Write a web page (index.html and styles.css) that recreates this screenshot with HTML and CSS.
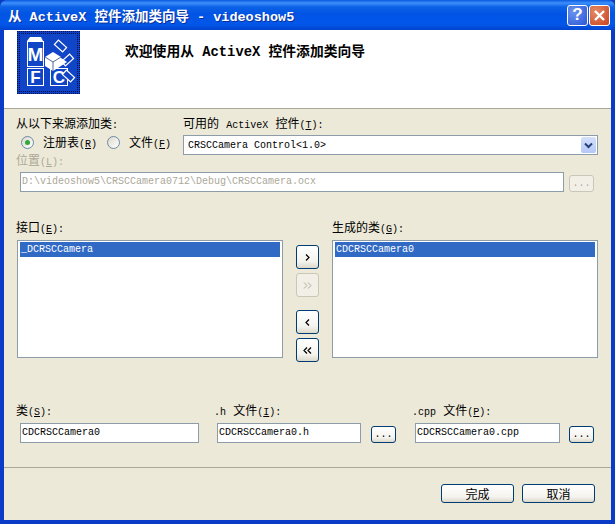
FILE: index.html
```html
<!DOCTYPE html>
<html lang="zh-CN">
<head>
    <meta charset="UTF-8">
    <title>从 ActiveX 控件添加类向导 - videoshow5</title>
    <link rel="stylesheet" href="styles.css">
</head>
<body>
    <div class="window">
        <div class="titlebar">
            <span class="title">从 ActiveX 控件添加类向导 - videoshow5</span>
            <div class="caption-btn help">?</div>
            <div class="caption-btn close">
                <svg width="13" height="13" viewBox="0 0 13 13"><path d="M2 2 L11 11 M11 2 L2 11" stroke="#fff" stroke-width="2.4" fill="none"/></svg>
            </div>
        </div>

        <div class="content">
            <div class="banner">
                <svg class="logo" width="63" height="63" viewBox="0 0 63 63">
                    <defs>
                        <pattern id="dots" width="2" height="2" patternUnits="userSpaceOnUse">
                            <rect width="2" height="2" fill="#0f3fc4"/>
                            <rect width="1" height="1" fill="#03124a"/>
                        </pattern>
                    </defs>
                    <rect width="63" height="63" fill="url(#dots)"/>
                    <rect x="3" y="3" width="57" height="57" fill="#1145c8"/>
                    <path d="M10 10 L13 6 H24 L26 10 Z" fill="#fff"/>
                    <g fill="none" stroke="#fff">
                        <rect x="10.5" y="10.5" width="16" height="25"/>
                        <rect x="10.5" y="37.5" width="16" height="17"/>
                        <rect x="33.5" y="37.5" width="17" height="17"/>
                    </g>
                    <text x="18.5" y="30" class="logo-letter" font-size="19">M</text>
                    <text x="18.5" y="52" class="logo-letter" font-size="17">F</text>
                    <text x="42" y="52" class="logo-letter" font-size="17">C</text>
                    <g fill="#1145c8" stroke="#fff" stroke-width="1.2">
                        <rect x="38" y="12" width="11" height="6" transform="rotate(42 43.5 15)"/>
                        <rect x="45" y="26" width="11" height="6" transform="rotate(-42 50.5 29)"/>
                        <rect x="46" y="42" width="11" height="6" transform="rotate(42 51.5 45)"/>
                    </g>
                    <path d="M36 21 L44 26 V35 L36 40 L28 35 V26 Z" fill="#fff"/>
                    <path d="M28 26 L36 31 L44 26 M36 31 V40" fill="none" stroke="#55689c" stroke-width="1"/>
                    <path d="M44 27 L50 31 L44 35 Z" fill="#fff"/>
                </svg>
                <h1 class="banner-title">欢迎使用从 ActiveX 控件添加类向导</h1>
            </div>

            <div class="source-row">
                <div class="source-left">
                    <div class="label">从以下来源添加类<span class="en">:</span></div>
                    <div class="radios">
                        <span class="radio checked"></span>
                        <span class="radio-text">注册表<span class="en">(<u>R</u>)</span></span>
                        <span class="radio"></span>
                        <span class="radio-text">文件<span class="en">(<u>F</u>)</span></span>
                    </div>
                    <div class="label disabled">位置<span class="en">(<u>L</u>):</span></div>
                </div>
                <div class="source-right">
                    <div class="label">可用的 <span class="en">ActiveX</span> 控件<span class="en">(<u>T</u>):</span></div>
                    <div class="combo">
                        <span class="combo-text en">CRSCCamera Control&lt;1.0&gt;</span>
                        <span class="combo-arrow">
                            <svg width="9" height="7" viewBox="0 0 9 7"><path d="M1 1.5 L4.5 5 L8 1.5" fill="none" stroke="#26407a" stroke-width="2"/></svg>
                        </span>
                    </div>
                </div>
            </div>

            <div class="path-row">
                <div class="field path-field en disabled">D:\videoshow5\CRSCCamera0712\Debug\CRSCCamera.ocx</div>
                <button class="btn browse" disabled>...</button>
            </div>

            <div class="lists">
                <div class="list-col">
                    <div class="label">接口<span class="en">(<u>E</u>):</span></div>
                    <div class="listbox">
                        <div class="list-item en">_DCRSCCamera</div>
                    </div>
                </div>
                <div class="move-btns">
                    <button class="btn move">
                        <svg width="5" height="7" viewBox="0 0 5 7"><path d="M1 0.5 L4 3.5 L1 6.5" fill="none" stroke="#000" stroke-width="1.2"/></svg>
                    </button>
                    <button class="btn move" disabled>
                        <svg width="9" height="7" viewBox="0 0 9 7"><path d="M1 0.5 L4 3.5 L1 6.5 M5 0.5 L8 3.5 L5 6.5" fill="none" stroke="#aca899" stroke-width="1"/></svg>
                    </button>
                    <button class="btn move back-start">
                        <svg width="5" height="7" viewBox="0 0 5 7"><path d="M4 0.5 L1 3.5 L4 6.5" fill="none" stroke="#000" stroke-width="1.2"/></svg>
                    </button>
                    <button class="btn move">
                        <svg width="9" height="7" viewBox="0 0 9 7"><path d="M4 0.5 L1 3.5 L4 6.5 M8 0.5 L5 3.5 L8 6.5" fill="none" stroke="#000" stroke-width="1.2"/></svg>
                    </button>
                </div>
                <div class="list-col">
                    <div class="label">生成的类<span class="en">(<u>G</u>):</span></div>
                    <div class="listbox">
                        <div class="list-item en">CDCRSCCamera0</div>
                    </div>
                </div>
            </div>

            <div class="files">
                <div class="file-col class-col">
                    <div class="label">类<span class="en">(<u>S</u>):</span></div>
                    <div class="file-line">
                        <div class="field class-field en">CDCRSCCamera0</div>
                    </div>
                </div>
                <div class="file-col h-col">
                    <div class="label"><span class="en">.h</span> 文件<span class="en">(<u>I</u>):</span></div>
                    <div class="file-line">
                        <div class="field h-field en">CDCRSCCamera0.h</div>
                        <button class="btn browse">...</button>
                    </div>
                </div>
                <div class="file-col cpp-col">
                    <div class="label"><span class="en">.cpp</span> 文件<span class="en">(<u>P</u>):</span></div>
                    <div class="file-line">
                        <div class="field cpp-field en">CDCRSCCamera0.cpp</div>
                        <button class="btn browse">...</button>
                    </div>
                </div>
            </div>

            <div class="footer">
                <button class="btn action">完成</button>
                <button class="btn action">取消</button>
            </div>
        </div>
    </div>
</body>
</html>
```

FILE: styles.css
```css
html, body {
    margin: 0;
    padding: 0;
    background: #0a3cc0;
}
body {
    font-family: "Liberation Mono", "Noto Sans CJK SC", monospace;
    font-size: 12px;
    color: #000;
}
.window {
    width: 615px;
    height: 524px;
    box-sizing: border-box;
    display: flex;
    flex-direction: column;
    background: #0a3cc8;
    border-radius: 7px 7px 0 0;
    overflow: hidden;
}
.en {
    font-family: "Liberation Mono", monospace;
    font-size: 10px;
}
u {
    text-decoration: underline;
}

/* title bar */
.titlebar {
    height: 30px;
    flex: none;
    display: flex;
    align-items: center;
    padding: 0 5px 0 8px;
    box-sizing: border-box;
    background: linear-gradient(#0a5ae0 0, #3d8ffa 3px, #0c62e6 7px, #0154e4 14px, #0257ea 24px, #0344d0 30px);
}
.title {
    flex: 1;
    color: #fff;
    font-size: 13.5px;
    font-weight: bold;
    text-shadow: 1px 1px 0 #0a2f9a;
    white-space: pre;
}
.caption-btn {
    width: 21px;
    height: 21px;
    box-sizing: border-box;
    border: 1px solid #fff;
    border-radius: 3px;
    display: flex;
    align-items: center;
    justify-content: center;
    color: #fff;
    font-family: "Liberation Sans", sans-serif;
    font-size: 17px;
    font-weight: bold;
}
.help {
    background: radial-gradient(circle at 30% 30%, #6c94ee, #2a55d8);
    margin-right: 1px;
}
.close {
    background: radial-gradient(circle at 30% 30%, #e58a68, #c8431f);
}

/* client area */
.content {
    flex: none;
    height: 490px;
    margin: 0 4px;
    background: #ece9d8;
}
.banner {
    height: 79px;
    box-sizing: border-box;
    background: #fff;
    border-bottom: 1px solid #aca899;
    display: flex;
    align-items: flex-start;
    padding-left: 13px;
}
.logo {
    margin-top: 1px;
    flex: none;
}
.logo-letter {
    fill: #fff;
    font-family: "Liberation Sans", sans-serif;
    font-weight: bold;
    text-anchor: middle;
}
.banner-title {
    margin: 15px 0 0 45px;
    font-size: 13.8px;
    line-height: 16px;
    font-weight: bold;
    white-space: pre;
}
.label {
    height: 14px;
    line-height: 14px;
    white-space: pre;
}
.disabled {
    color: #aca899;
}

/* source + combo */
.source-row {
    display: flex;
    padding: 9px 13px 0 12px;
}
.source-left {
    width: 167px;
    flex: none;
}
.source-right {
    flex: 1;
}
.radios {
    height: 16px;
    margin: 2px 0 5px;
    display: flex;
    align-items: center;
    padding-left: 5px;
}
.radio {
    width: 13px;
    height: 13px;
    box-sizing: border-box;
    border: 1px solid #6d8aa6;
    border-radius: 50%;
    background: linear-gradient(135deg, #dcd9cc, #fff);
    margin-right: 9px;
    position: relative;
}
.radio.checked::after {
    content: "";
    position: absolute;
    left: 3px;
    top: 3px;
    width: 5px;
    height: 5px;
    border-radius: 50%;
    background: #2fa83c;
}
.radio-text {
    width: 64px;
    white-space: pre;
}
.radio-text:last-child {
    width: auto;
}
.combo {
    margin-top: 3px;
    height: 20px;
    box-sizing: border-box;
    border: 1px solid #8c9ca9;
    background: #fff;
    display: flex;
    align-items: center;
    padding: 0 1px 0 4px;
}
.combo-text {
    flex: 1;
    white-space: pre;
}
.combo-arrow {
    width: 15px;
    height: 16px;
    background: linear-gradient(#d5e0fa, #b4c8f6);
    border-radius: 2px;
    display: flex;
    align-items: center;
    justify-content: center;
}

/* text fields */
.field {
    height: 20px;
    line-height: 18px;
    box-sizing: border-box;
    border: 1px solid #8c9ca9;
    background: #fff;
    padding-left: 1px;
    white-space: pre;
    flex: none;
}
.path-row {
    display: flex;
    align-items: flex-end;
    margin: 3px 0 0 16px;
}
.path-field {
    width: 544px;
}
.path-row .browse {
    margin-left: 5px;
}

/* buttons */
.btn {
    margin: 0;
    padding: 0;
    box-sizing: border-box;
    border: 1px solid #003c74;
    border-radius: 3px;
    background: linear-gradient(#fff, #f4f3ee 70%, #dcd8ca);
    color: #000;
    font-family: "Liberation Mono", "Noto Sans CJK SC", monospace;
    font-size: 12px;
    display: flex;
    align-items: center;
    justify-content: center;
    flex: none;
}
.btn:disabled {
    border-color: #c9c7ba;
    background: #f2f0e6;
    color: #aca899;
}
.browse {
    width: 25px;
    height: 17px;
    font-size: 10px;
}

/* lists */
.lists {
    display: flex;
    height: 136px;
    padding-left: 12px;
    margin-top: 30px;
}
.list-col {
    width: 267px;
    flex: none;
}
.listbox {
    width: 266px;
    height: 118px;
    box-sizing: border-box;
    margin: 4px 0 0 1px;
    border: 1px solid #8c9ca9;
    background: #fff;
    padding: 1px 2px 0 2px;
}
.list-col:last-child .listbox {
    margin-left: 0;
}
.list-item {
    height: 15px;
    line-height: 15px;
    background: #316ac5;
    color: #fff;
    padding-left: 1px;
}
.move-btns {
    width: 23px;
    flex: none;
    margin: 23px 13px 0 13px;
    display: flex;
    flex-direction: column;
    gap: 4px;
}
.move {
    width: 23px;
    height: 24px;
}
.back-start {
    margin-top: 9px;
}

/* class + file names */
.files {
    display: flex;
    margin: 47px 0 0 12px;
}
.class-col {
    width: 198px;
}
.h-col {
    width: 198px;
}
.file-col {
    flex: none;
}
.file-line {
    display: flex;
    align-items: flex-end;
    margin: 4px 0 0 3px;
}
.class-field {
    width: 179px;
    margin-left: 1px;
}
.h-field {
    width: 144px;
    margin-right: 10px;
}
.cpp-field {
    width: 145px;
    margin-right: 9px;
}

/* bottom buttons */
.footer {
    margin-top: 24px;
    height: 53px;
    box-sizing: border-box;
    border-top: 1px solid #aca899;
    display: flex;
    justify-content: flex-end;
    gap: 8px;
    padding: 16px 16px 0 0;
}
.action {
    width: 73px;
    height: 19px;
}
```
